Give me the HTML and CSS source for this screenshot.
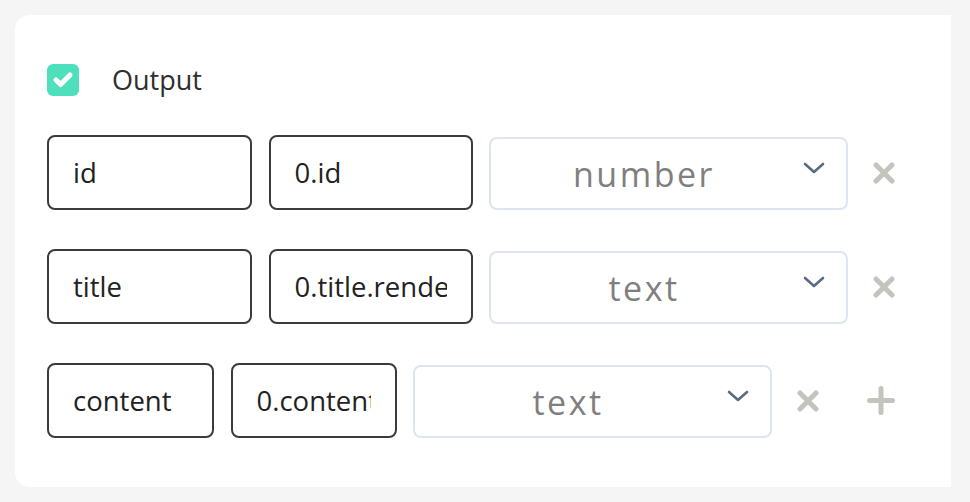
FILE: index.html
```html
<!DOCTYPE html>
<html>
<head>
<meta charset="utf-8">
<link rel="stylesheet" href="styles.css">
</head>
<body>
<div class="card">
  <div class="check-row">
    <span class="checkbox">
      <svg width="32" height="32" viewBox="0 0 32 32"><polyline points="9,16 13.5,20.5 23,11" fill="none" stroke="#fff" stroke-width="5" stroke-linecap="round" stroke-linejoin="round"/></svg>
    </span>
    <span class="check-label">Output</span>
  </div>

  <div class="row">
    <input class="field" readonly value="id">
    <input class="field" readonly value="0.id">
    <div class="select"><span class="select-text">number</span><svg class="chev" width="22" height="12" viewBox="0 0 22 12"><polyline points="2,2 11,10 20,2" fill="none" stroke="#5b6b84" stroke-width="2.6" stroke-linecap="round" stroke-linejoin="round"/></svg></div>
    <svg class="remove" width="22" height="22" viewBox="0 0 22 22"><path d="M3 3 L19 19 M19 3 L3 19" stroke="#c4c4bf" stroke-width="5" stroke-linecap="round"/></svg>
  </div>

  <div class="row">
    <input class="field" readonly value="title">
    <input class="field" readonly value="0.title.rendered">
    <div class="select"><span class="select-text">text</span><svg class="chev" width="22" height="12" viewBox="0 0 22 12"><polyline points="2,2 11,10 20,2" fill="none" stroke="#5b6b84" stroke-width="2.6" stroke-linecap="round" stroke-linejoin="round"/></svg></div>
    <svg class="remove" width="22" height="22" viewBox="0 0 22 22"><path d="M3 3 L19 19 M19 3 L3 19" stroke="#c4c4bf" stroke-width="5" stroke-linecap="round"/></svg>
  </div>

  <div class="row">
    <input class="field" readonly value="content">
    <input class="field" readonly value="0.content.rendered">
    <div class="select"><span class="select-text">text</span><svg class="chev" width="22" height="12" viewBox="0 0 22 12"><polyline points="2,2 11,10 20,2" fill="none" stroke="#5b6b84" stroke-width="2.6" stroke-linecap="round" stroke-linejoin="round"/></svg></div>
    <svg class="remove" width="22" height="22" viewBox="0 0 22 22"><path d="M3 3 L19 19 M19 3 L3 19" stroke="#c4c4bf" stroke-width="5" stroke-linecap="round"/></svg>
    <svg class="add" width="28" height="29" viewBox="0 0 28 29"><path d="M14 2.5 V26.5 M2.5 14.5 H25.5" stroke="#c4c4bf" stroke-width="5" stroke-linecap="round"/></svg>
  </div>
</div>
</body>
</html>
```
FILE: styles.css
```css
html, body {
  margin: 0;
  padding: 0;
  background: #f5f5f5;
  font-family: "Open Sans", "Noto Sans", sans-serif;
}
body {
  padding: 15px 0 0 15px;
}
.card {
  width: 936px;
  height: 472px;
  box-sizing: border-box;
  background: #fff;
  border-radius: 15px 0 0 15px;
  padding: 49px 0 49px 32px;
  display: flex;
  flex-direction: column;
  gap: 39px;
}
.check-row {
  display: flex;
  align-items: center;
  height: 32px;
}
.checkbox {
  width: 32px;
  height: 32px;
  border-radius: 6px;
  background: #4ee0bc;
  display: block;
}
.checkbox svg { display: block; }
.check-label {
  margin-left: 33px;
  font-size: 27px;
  color: #2e2e2e;
  line-height: 32px;
}
.row {
  display: flex;
  align-items: flex-end;
  width: 848px;
  gap: 17px;
  height: 75px;
}
.field {
  flex: 1 1 0;
  min-width: 0;
  height: 75px;
  box-sizing: border-box;
  border: 2px solid #3b3b3b;
  border-radius: 8px;
  padding: 0 24px;
  font-family: "Open Sans", "Noto Sans", sans-serif;
  font-size: 27.5px;
  color: #222;
  background: #fff;
  outline: none;
  margin: 0;
}
.select {
  flex: 0 0 359px;
  height: 73px;
  box-sizing: border-box;
  border: 2px solid #dfe5ef;
  border-radius: 8px;
  display: flex;
  align-items: center;
  margin-left: -1px;
}
.select-text {
  flex: 1;
  text-align: center;
  font-size: 34px;
  letter-spacing: 2.5px;
  color: #7f7f7f;
  padding-left: 3px;
}
.chev {
  margin: 0 21px 12px 9px;
  flex: none;
}
.remove {
  flex: none;
  margin-left: 8px;
  align-self: center;
}
.add {
  flex: none;
  margin-left: 31px;
  align-self: center;
}
```
